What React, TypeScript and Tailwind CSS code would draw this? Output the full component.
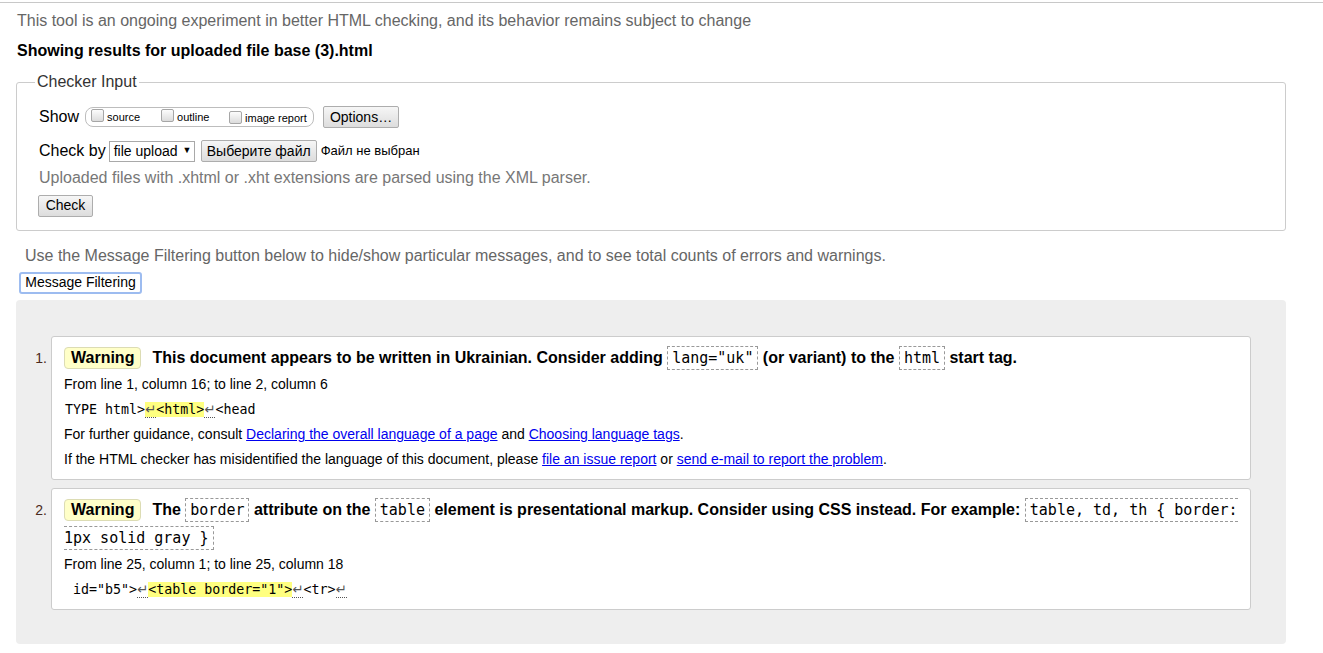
function Box({ label }: { label: string }) {
  return (
    <span className="inline-flex items-center">
      <span className="inline-block w-[13px] h-[13px] border border-[#a6a6a6] rounded-[2px] bg-gradient-to-b from-[#fcfcfc] to-[#dcdcdc]" />
      <span className="ml-[3px] text-[11px] leading-[13px] pt-[3px]">{label}</span>
    </span>
  );
}

function Btn({ children, className = "" }: { children: React.ReactNode; className?: string }) {
  return (
    <span
      className={
        "inline-flex items-center justify-center h-[22px] border border-[#adadad] rounded-[2px] bg-gradient-to-b from-[#f6f6f6] to-[#dddddd] text-[14px] text-black " +
        className
      }
    >
      {children}
    </span>
  );
}

function Code({ children }: { children: React.ReactNode }) {
  return (
    <code className="border border-dashed border-[#999] px-[4px] py-[2px] font-['DejaVu_Sans_Mono',monospace] text-[15px] font-normal">
      {children}
    </code>
  );
}

function Ret() {
  return (
    <span className="border-b border-dotted border-[#555] text-[#555] font-['DejaVu_Sans',sans-serif]">↵</span>
  );
}

function Badge() {
  return (
    <span className="inline-block bg-[#ffffc8] border border-[#dcdcb4] rounded-[4px] px-[6px] leading-[20px] mr-[11px] font-bold">
      Warning
    </span>
  );
}

function A({ children }: { children: React.ReactNode }) {
  return <span className="text-[#0000ee] underline">{children}</span>;
}

function Message({ n, first, children }: { n: number; first?: boolean; children: React.ReactNode }) {
  return (
    <div className={"flex " + (first ? "" : "mt-[8px]")}>
      <div className="w-[35px] shrink-0 text-right pr-[4px] pt-[13px] text-[14px] text-[#4a2a20] leading-[18px]">{n}.</div>
      <div className="flex-1 bg-white border border-[#cccccc] rounded-[3px] pl-[12px] pr-[12px] pt-[7px] pb-[7px]">
        {children}
      </div>
    </div>
  );
}

export default function App() {
  return (
    <div className="min-h-[653px] bg-white font-['Liberation_Sans',Arial,sans-serif] text-black">
      <div className="mt-[2px] border-t border-[#c8c8c8]" />
      <div className="ml-[16px] w-[1270px]">
        <p className="mt-[9px] pl-[1px] text-[16px] leading-[18px] text-[#666]">
          This tool is an ongoing experiment in better HTML checking, and its behavior remains subject to change
        </p>
        <p className="mt-[12px] pl-[1px] text-[16px] leading-[18px] font-bold">
          Showing results for uploaded file base (3).html
        </p>

        <fieldset className="mt-[13px] border border-[#cccccc] rounded-[3px] pl-[22px] pr-[22px] pb-[13px]">
          <legend className="-ml-[4px] px-[2px] text-[16px] leading-[18px] text-[#333]">Checker Input</legend>
          <div className="pt-[9px] h-[43px] flex items-center">
            <span className="text-[16px]">Show</span>
            <span className="ml-[6px] h-[20px] w-[229px] border border-[#bdbdbd] rounded-[8px] flex items-center pl-[5px]">
              <span className="w-[70px]"><Box label="source" /></span>
              <span className="w-[68px]"><Box label="outline" /></span>
              <Box label="image report" />
            </span>
            <Btn className="ml-[9px] w-[76px]">Options…</Btn>
          </div>
          <div className="h-[34px] flex items-center">
            <span className="text-[16px]">Check by</span>
            <span className="ml-[3px] h-[21px] w-[86px] border border-[#a9a9a9] bg-white flex items-center pl-[4px] text-[14px]">
              file upload
              <span className="ml-[5px] text-[9px]">▼</span>
            </span>
            <Btn className="ml-[6px] w-[116px]">Выберите файл</Btn>
            <span className="ml-[4px] text-[13px]">Файл не выбран</span>
          </div>
          <div className="h-[20px] flex items-center text-[16px] text-[#777]">
            Uploaded files with .xhtml or .xht extensions are parsed using the XML parser.
          </div>
          <div className="mt-[5px] -ml-[1px]">
            <Btn className="w-[55px]">Check</Btn>
          </div>
        </fieldset>

        <p className="mt-[16px] pl-[9px] text-[16px] leading-[18px] text-[#666]">
          Use the Message Filtering button below to hide/show particular messages, and to see total counts of errors and warnings.
        </p>
        <div className="mt-[5px] ml-[3px]">
          <span className="inline-flex items-center justify-center h-[22px] w-[123px] border-2 border-[#9dbcf0] rounded-[3px] bg-white text-[14px]">
            Message Filtering
          </span>
        </div>

        <div className="mt-[6px] bg-[#eeeeee] rounded-[4px] pt-[36px] pr-[35px] pb-[34px]">
          <Message n={1} first>
            <div className="text-[16px] leading-[28px] font-bold">
              <Badge />
              This document appears to be written in Ukrainian. Consider adding <Code>lang="uk"</Code> (or variant) to the{" "}
              <Code>html</Code> start tag.
            </div>
            <div className="text-[14px] leading-[25px]">From line 1, column 16; to line 2, column 6</div>
            <div className="leading-[25px] font-['DejaVu_Sans_Mono',monospace] text-[13.3px] whitespace-pre pl-[1px]">
              TYPE html&gt;<span className="bg-[#ffff80]"><Ret />&lt;html&gt;</span><Ret />&lt;head
            </div>
            <div className="text-[14px] leading-[25px]">
              For further guidance, consult <A>Declaring the overall language of a page</A> and <A>Choosing language tags</A>.
            </div>
            <div className="text-[14px] leading-[25px]">
              If the HTML checker has misidentified the language of this document, please <A>file an issue report</A> or{" "}
              <A>send e-mail to report the problem</A>.
            </div>
          </Message>
          <Message n={2}>
            <div className="text-[16px] leading-[28px] font-bold">
              <Badge />
              The <Code>border</Code> attribute on the <Code>table</Code> element is presentational markup. Consider using CSS
              instead. For example: <Code>table, td, th {"{"} border: 1px solid gray {"}"}</Code>
            </div>
            <div className="text-[14px] leading-[25px]">From line 25, column 1; to line 25, column 18</div>
            <div className="leading-[25px] font-['DejaVu_Sans_Mono',monospace] text-[13.3px] whitespace-pre pl-[1px]">
              {" "}id="b5"&gt;<Ret /><span className="bg-[#ffff80]">&lt;table border="1"&gt;</span><Ret />&lt;tr&gt;<Ret />
            </div>
          </Message>
        </div>
      </div>
    </div>
  );
}
